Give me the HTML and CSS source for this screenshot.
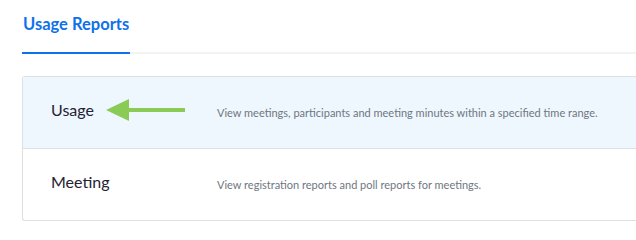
FILE: index.html
```html
<!DOCTYPE html>
<html lang="en">
<head>
  <meta charset="UTF-8">
  <title>Usage Reports</title>
  <link rel="stylesheet" href="styles.css">
</head>
<body>

  <div class="page">
    <div class="tabs">
      <div class="tab active">Usage Reports</div>
    </div>

    <div class="report-list">
      <div class="report-row selected">
        <div class="report-name">
          Usage
          <svg class="arrow" width="80" height="24" viewBox="0 0 80 24">
            <path d="M0 12 L23 1 L23 23 Z" fill="#8acb56"/>
            <rect x="22" y="10" width="57" height="4" fill="#8acb56"/>
          </svg>
        </div>
        <div class="report-desc">View meetings, participants and meeting minutes within a specified time range.</div>
      </div>
      <div class="report-row">
        <div class="report-name">Meeting</div>
        <div class="report-desc">View registration reports and poll reports for meetings.</div>
      </div>
    </div>
  </div>

</body>
</html>
```

FILE: styles.css
```css
body {
  font-family: 'Lato', sans-serif;
  background-color: white;
  margin: 0;
  padding: 0;
}

.page {
  padding-left: 22px;
}

.tabs {
  display: flex;
  border-bottom: 2px solid #f2f3f5;
  height: 54px;
  box-sizing: border-box;
}

.tab {
  font-size: 16.5px;
  font-weight: bold;
  color: #0e71eb;
  white-space: nowrap;
  padding: 14px 1px 0 1px;
  box-sizing: border-box;
  border-bottom: 2px solid #0e71eb;
  margin-bottom: -2px;
}

.report-list {
  margin-top: 22px;
  border: 1px solid #dedfe2;
  border-right: none;
  border-radius: 3px 0 0 3px;
}

.report-row {
  display: flex;
  align-items: center;
  height: 71px;
}

.report-row + .report-row {
  border-top: 1px solid #dedfe2;
}

.report-row.selected {
  background-color: #eef6fe;
}

.report-name {
  display: flex;
  align-items: center;
  width: 165px;
  padding-left: 28px;
  padding-bottom: 7px;
  font-size: 16px;
  color: #232333;
  box-sizing: border-box;
}

.arrow {
  margin-left: 12px;
  margin-top: 1px;
}

.report-desc {
  font-size: 11px;
  color: #6e7680;
  padding-left: 29px;
}
```
